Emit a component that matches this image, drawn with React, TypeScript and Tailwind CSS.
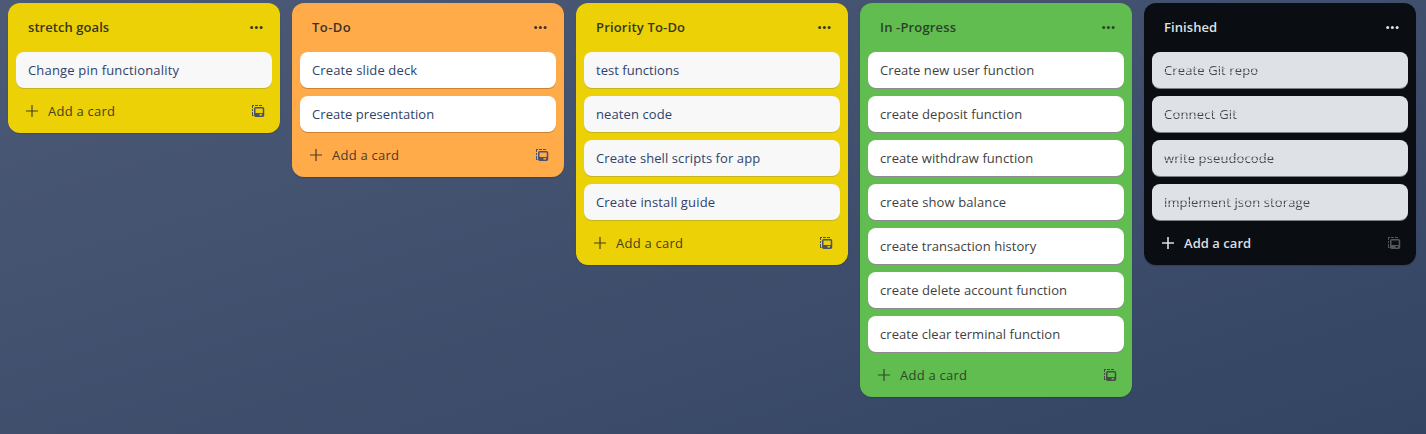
type Item = { t: string; w: number };
type Tone = "yellow" | "orange" | "green" | "black";
type List = { title: Item; tone: Tone; cards: Item[] };

const lists: List[] = [
  { title: { t: "stretch goals", w: 81 }, tone: "yellow", cards: [{ t: "Change pin functionality", w: 151 }] },
  {
    title: { t: "To-Do", w: 39 },
    tone: "orange",
    cards: [
      { t: "Create slide deck", w: 105 },
      { t: "Create presentation", w: 122 },
    ],
  },
  {
    title: { t: "Priority To-Do", w: 89 },
    tone: "yellow",
    cards: [
      { t: "test functions", w: 83 },
      { t: "neaten code", w: 76 },
      { t: "Create shell scripts for app", w: 164 },
      { t: "Create install guide", w: 119 },
    ],
  },
  {
    title: { t: "In -Progress", w: 76 },
    tone: "green",
    cards: [
      { t: "Create new user function", w: 154 },
      { t: "create deposit function", w: 142 },
      { t: "create withdraw function", w: 153 },
      { t: "create show balance", w: 126 },
      { t: "create transaction history", w: 156 },
      { t: "create delete account function", w: 187 },
      { t: "create clear terminal function", w: 180 },
    ],
  },
  {
    title: { t: "Finished", w: 53 },
    tone: "black",
    cards: [
      { t: "Create Git repo", w: 94 },
      { t: "Connect Git", w: 73 },
      { t: "write pseudocode", w: 110 },
      { t: "implement json storage", w: 146 },
    ],
  },
];

const tones = {
  yellow: { list: "bg-[#ebd105]", head: "text-[#38371f]", card: "bg-[#f8f8f9] text-[#30426a] shadow-[0_1px_0_#c5b31d]", add: "text-[#464219]", icon: "text-[#4b5360]" },
  orange: { list: "bg-[#ffab4a]", head: "text-[#3b3129]", card: "bg-white text-[#30426a] shadow-[0_1px_0_#cb8230]", add: "text-[#4b3a2b]", icon: "text-[#4b5270]" },
  green: { list: "bg-[#61bd4f]", head: "text-[#2b4228]", card: "bg-white text-[#3f3f3f] shadow-[0_1px_0_#8f8a93]", add: "text-[#2c4828]", icon: "text-[#414f40]" },
  black: { list: "bg-[#0a0d12]", head: "text-[#dfe1e5]", card: "bg-[#dee1e6] text-[#54585e] shadow-[0_1px_0_#7b7e82]", add: "text-[#dcdfe3]", icon: "text-[#54575c]" },
};

// Stretches or tightens a label evenly to its set width.
function Label({ item, className = "" }: { item: Item; className?: string }) {
  return (
    <span
      className={"block whitespace-nowrap " + className}
      ref={(el) => {
        if (!el) return;
        el.style.letterSpacing = "0px";
        const range = document.createRange();
        range.selectNodeContents(el);
        const natural = range.getBoundingClientRect().width;
        el.style.letterSpacing = (item.w + 0.2 - natural) / item.t.length + "px";
      }}
    >
      {item.t}
    </span>
  );
}

function TemplateIcon({ className }: { className: string }) {
  return (
    <svg viewBox="0 0 14 14" className={"h-3.5 w-3.5 " + className} fill="none" stroke="currentColor">
      <path d="M1 1.5h2M4 1.5h3M8 1.5h3M1.5 2v2M1.5 5v2M1.5 8v3M1 11.5h1.5" />
      <rect x="3.75" y="3.75" width="8.75" height="8.5" rx="1" strokeWidth="1.5" />
      <path d="M4 9.5h8.5" />
      <path d="M4 11h4.5M11 11h1.5" strokeWidth="2" />
    </svg>
  );
}

export default function App() {
  return (
    <div className="flex h-[434px] w-[1426px] items-start gap-3 overflow-hidden bg-linear-[163deg,#4c5a76,#334463] px-2 pt-[3px] font-['Open_Sans','Noto_Sans',sans-serif] text-[13px] leading-5">
      {lists.map((list) => {
        const c = tones[list.tone];
        const dark = list.tone === "black";
        return (
          <section key={list.title.t} className={"flex w-[272px] shrink-0 flex-col rounded-xl px-2 pb-2 shadow-[0_1px_1px_#091e4240] " + c.list}>
            <header className={"flex h-[49px] items-center justify-between pr-[9px] pb-px pl-3 " + c.head}>
              <Label item={list.title} className="font-semibold" />
              <svg viewBox="0 0 13 3" className="h-[3px] w-[13px]" fill="currentColor">
                <circle cx="1.7" cy="1.5" r="1.5" />
                <circle cx="6.4" cy="1.5" r="1.5" />
                <circle cx="11.1" cy="1.5" r="1.5" />
              </svg>
            </header>
            <div className="flex flex-col gap-2">
              {list.cards.map((card) => (
                <div key={card.t} className={"flex h-9 items-center rounded-lg px-3 " + c.card}>
                  <Label
                    item={card}
                    className={
                      dark
                        ? "bg-[linear-gradient(#42464c_8px,#a9acb2_8px,#a9acb2_9px,#42464c_9px,#42464c_12px,#a9acb2_12px,#a9acb2_13px,#42464c_13px)] bg-clip-text text-transparent"
                        : ""
                    }
                  />
                </div>
              ))}
            </div>
            <footer className="mt-2 flex h-[29px] items-center justify-between pr-[7px] pl-2.5">
              <div className={"flex items-center gap-2.5 pt-px " + c.add}>
                <svg viewBox="0 0 12 12" className="h-3 w-3" stroke="currentColor" strokeWidth={dark ? 1.6 : 1.2}>
                  <path d="M6 0v12M0 6h12" />
                </svg>
                <Label item={{ t: "Add a card", w: 67 }} className={dark ? "font-semibold" : ""} />
              </div>
              <TemplateIcon className={c.icon} />
            </footer>
          </section>
        );
      })}
    </div>
  );
}
